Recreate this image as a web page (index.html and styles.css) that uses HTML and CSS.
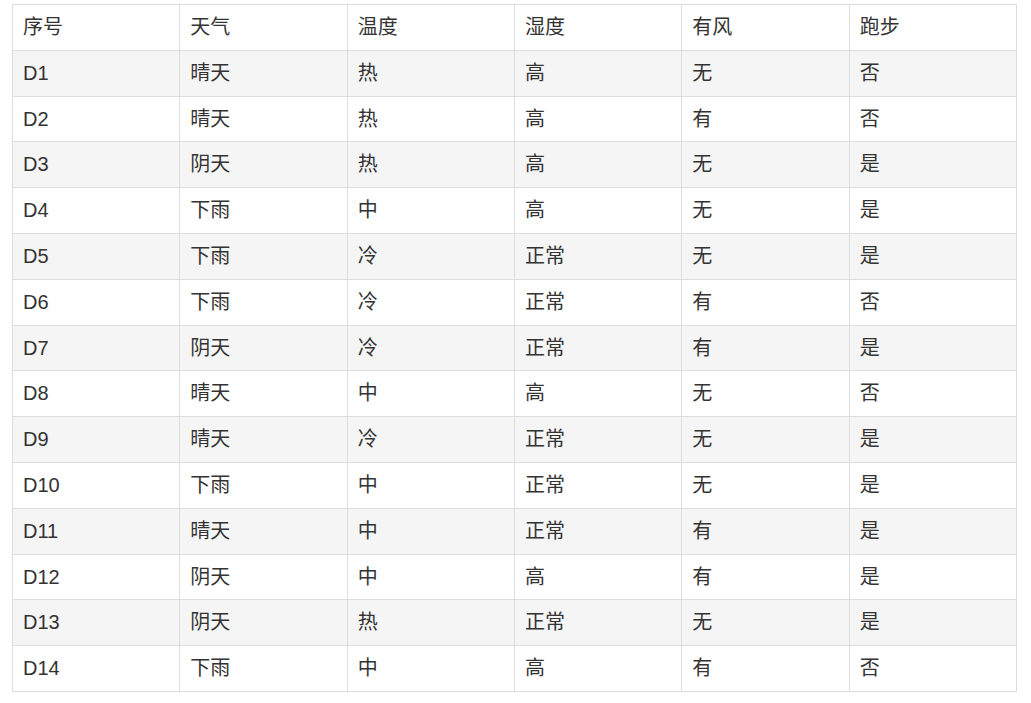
FILE: index.html
```html
<!DOCTYPE html>
<html lang="zh">
<head>
<meta charset="utf-8">
<link rel="stylesheet" href="styles.css">
</head>
<body>
<table class="data">
<thead>
<tr><th>序号</th><th>天气</th><th>温度</th><th>湿度</th><th>有风</th><th>跑步</th></tr>
</thead>
<tbody>
<tr><td>D1</td><td>晴天</td><td>热</td><td>高</td><td>无</td><td>否</td></tr>
<tr><td>D2</td><td>晴天</td><td>热</td><td>高</td><td>有</td><td>否</td></tr>
<tr><td>D3</td><td>阴天</td><td>热</td><td>高</td><td>无</td><td>是</td></tr>
<tr><td>D4</td><td>下雨</td><td>中</td><td>高</td><td>无</td><td>是</td></tr>
<tr><td>D5</td><td>下雨</td><td>冷</td><td>正常</td><td>无</td><td>是</td></tr>
<tr><td>D6</td><td>下雨</td><td>冷</td><td>正常</td><td>有</td><td>否</td></tr>
<tr><td>D7</td><td>阴天</td><td>冷</td><td>正常</td><td>有</td><td>是</td></tr>
<tr><td>D8</td><td>晴天</td><td>中</td><td>高</td><td>无</td><td>否</td></tr>
<tr><td>D9</td><td>晴天</td><td>冷</td><td>正常</td><td>无</td><td>是</td></tr>
<tr><td>D10</td><td>下雨</td><td>中</td><td>正常</td><td>无</td><td>是</td></tr>
<tr><td>D11</td><td>晴天</td><td>中</td><td>正常</td><td>有</td><td>是</td></tr>
<tr><td>D12</td><td>阴天</td><td>中</td><td>高</td><td>有</td><td>是</td></tr>
<tr><td>D13</td><td>阴天</td><td>热</td><td>正常</td><td>无</td><td>是</td></tr>
<tr><td>D14</td><td>下雨</td><td>中</td><td>高</td><td>有</td><td>否</td></tr>
</tbody>
</table>
</body>
</html>
```

FILE: styles.css
```css
html, body {
  margin: 0;
  background: #fff;
}
body {
  padding: 4px 0 0 12px;
  font-family: "Liberation Sans", "Noto Sans CJK SC", sans-serif;
  font-size: 20px;
  color: #333;
}
.data {
  width: 1005px;
  border-collapse: collapse;
  table-layout: fixed;
}
.data th,
.data td {
  border: 1px solid #ddd;
  padding: 10px 10px;
  height: 24.8px;
  line-height: 24.8px;
  text-align: left;
  font-weight: normal;
  vertical-align: middle;
}
.data tbody tr:nth-child(odd) {
  background: #f5f5f5;
}
```
